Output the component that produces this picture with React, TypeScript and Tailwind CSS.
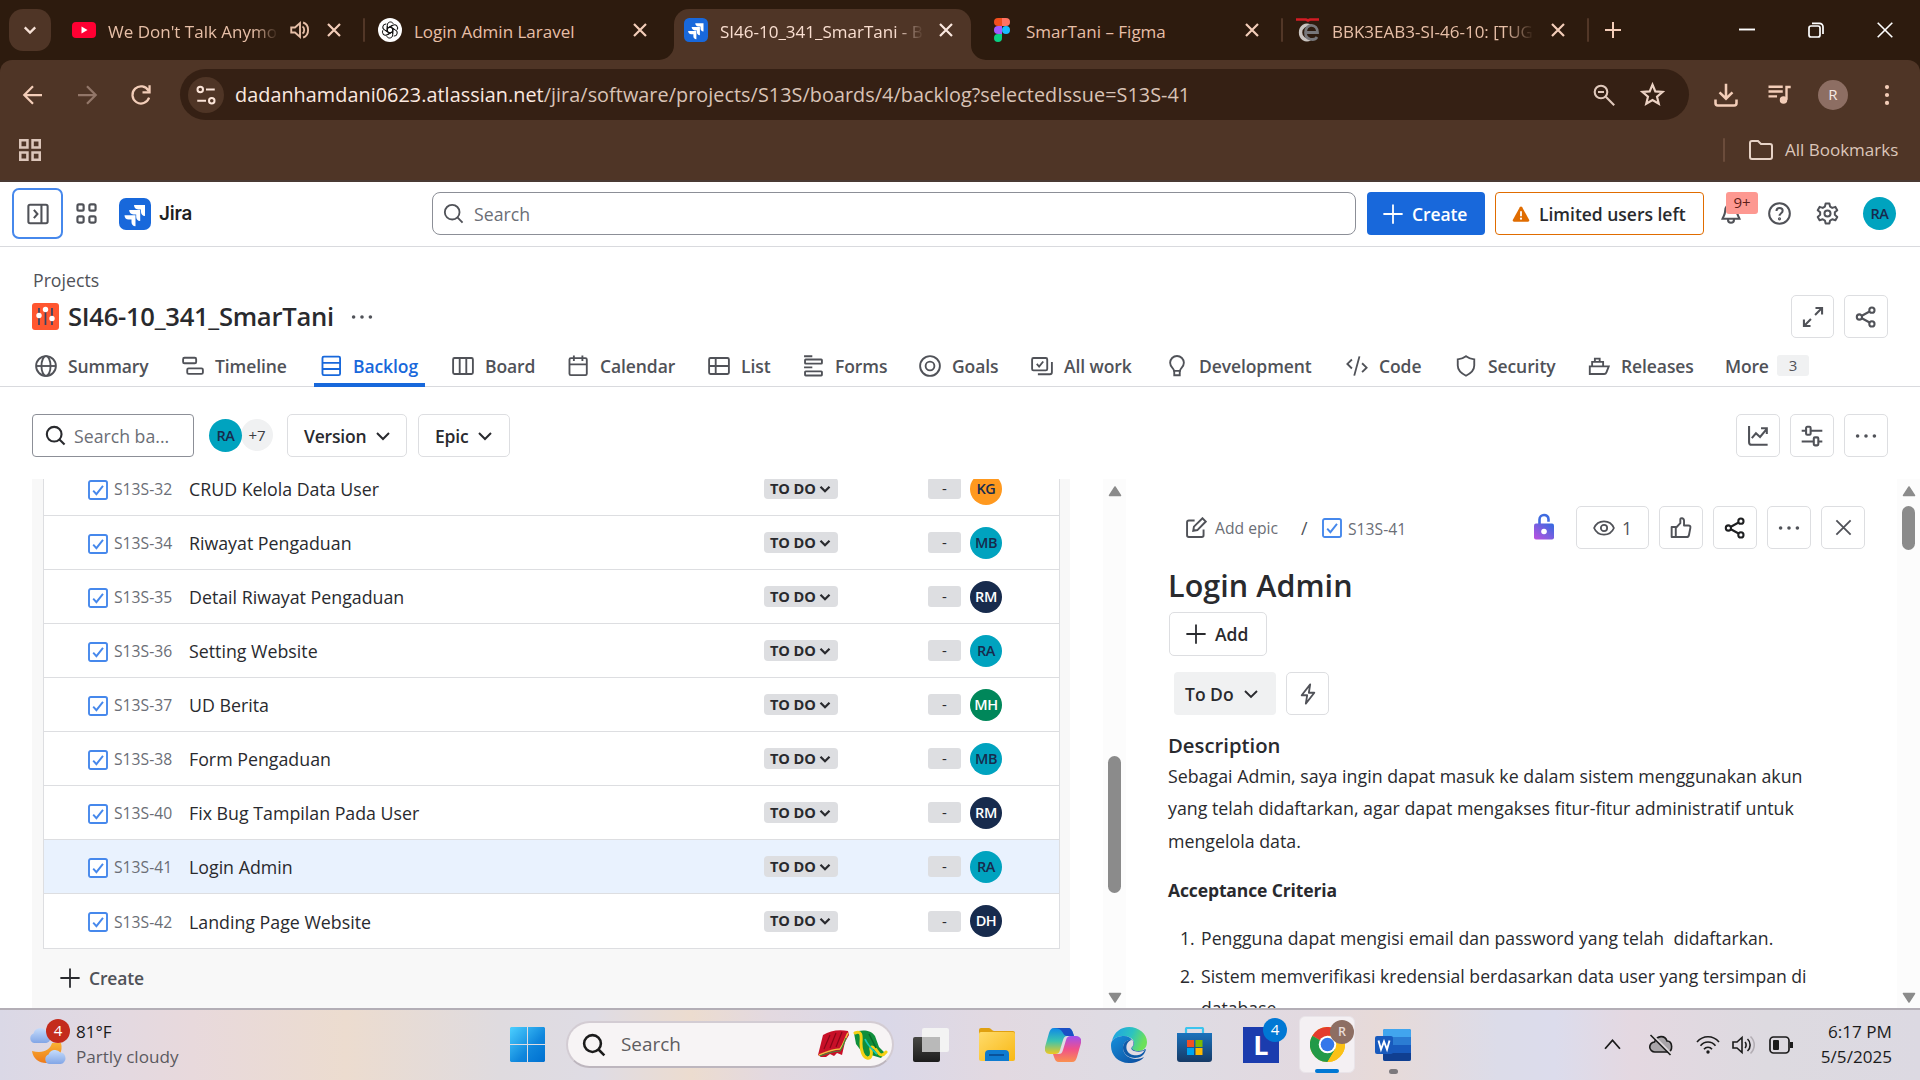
import React from "react";

type IconProps = { children: React.ReactNode; className?: string; sw?: number };

/* 16-unit line icon, drawn at 22px unless a class says otherwise */
function I({ children, className = "size-[22px]", sw = 1.4 }: IconProps) {
  return (
    <svg viewBox="0 0 16 16" className={`shrink-0 ${className}`} fill="none" stroke="currentColor" strokeWidth={sw}>
      {children}
    </svg>
  );
}

const Plus = ({ className = "size-[22px]" }: { className?: string }) => (
  <I className={className} sw={1.3}><path d="M8 1v14M1 8h14" /></I>
);
const Chevron = ({ className = "size-[16px]", sw = 2 }: { className?: string; sw?: number }) => (
  <I className={className} sw={sw}><path d="M2 5l6 6 6-6" /></I>
);
const Dots = () => (
  <I><g fill="currentColor" stroke="none"><circle cx="1.9" cy="8" r="1.3" /><circle cx="8" cy="8" r="1.3" /><circle cx="14.1" cy="8" r="1.3" /></g></I>
);
const Magnifier = ({ className = "size-[22px]", sw = 1.4 }: { className?: string; sw?: number }) => (
  <I className={className} sw={sw}><circle cx="7" cy="7" r="5.6" /><path d="M11 11l3.9 3.9" /></I>
);
const Share = () => (
  <I sw={1.5}><circle cx="3.2" cy="8" r="1.9" /><circle cx="12.3" cy="3" r="1.9" /><circle cx="12.3" cy="13" r="1.9" /><path d="M5 7.1l5.6-3.1M5 8.9l5.6 3.1" /></I>
);
const Cross = ({ className = "size-[16px]", sw = 2 }: { className?: string; sw?: number }) => (
  <I className={className} sw={sw}><path d="M2 2l12 12M14 2L2 14" /></I>
);
const TaskCheck = () => (
  <svg viewBox="0 0 20 20" className="size-[20px] shrink-0" fill="none" stroke="#4688ec">
    <rect x="1" y="1" width="18" height="18" rx="1.8" strokeWidth="1.9" fill="#fff" />
    <path d="M5.2 10.6l3.2 3.6 6.6-8.4" strokeWidth="1.9" />
  </svg>
);
const JiraMark = ({ className }: { className: string }) => (
  <svg viewBox="0 0 32 32" className={`shrink-0 ${className}`}>
    <rect width="32" height="32" rx="7" fill="#1868db" />
    <g fill="#fff">
      <path d="M15 7h11v11c-2.5 0-4-1.8-4-4v-2.600h-2.800c-2.500 0-4.200-1.900-4.200-4.400z" />
      <path d="M10.200 12.100h11v11c-2.500 0-4-1.800-4-4v-2.600h-2.800c-2.500 0-4.200-1.900-4.200-4.400z" />
      <path d="M5.500 17.200h11v11c-2.500 0-4-1.800-4-4v-2.600H9.700c-2.500 0-4.200-1.900-4.200-4.400z" />
    </g>
  </svg>
);

/* ---------- browser ---------- */

function OpenAiMark() {
  return (
    <svg viewBox="0 0 24 24" className="size-[24px]">
      <circle cx="12" cy="12" r="12" fill="#fff" />
      <g fill="none" stroke="#111" strokeWidth="1">
        {[0, 60, 120, 180, 240, 300].map((a) => (
          <path key={a} transform={`rotate(${a} 12 12)`} d="M9.300 13.500V7.200c0-3.600 4.600-4.400 6-1.400M9.300 10.400l2.700-1.600 5 2.900" />
        ))}
      </g>
    </svg>
  );
}

function FigmaMark() {
  return (
    <svg viewBox="0 0 16 24" className="h-[24px] w-[16px]">
      <path d="M4 0h4v8H4a4 4 0 010-8z" fill="#f24e1e" />
      <path d="M8 0h4a4 4 0 010 8H8z" fill="#ff7262" />
      <path d="M4 8h4v8H4a4 4 0 010-8z" fill="#a259ff" />
      <circle cx="12" cy="12" r="4" fill="#1abcfe" />
      <path d="M4 16h4v4a4 4 0 11-4-4z" fill="#0acf83" />
    </svg>
  );
}

function CeloeMark() {
  return (
    <svg viewBox="0 0 24 24" className="size-[24px]" fill="none">
      <path d="M0 1.500h10l2 1 2-1h9" stroke="#d41c24" strokeWidth="2.600" />
      <path d="M14 8a6.500 7.300 0 100 13" stroke="#c9c4c0" strokeWidth="3.400" />
      <path d="M9.500 14.500h12c0-9-11.500-10-12 0 0 8 9 8.500 11.500 4.500" stroke="#77777a" strokeWidth="2.800" />
    </svg>
  );
}

const tabs = [
  {
    title: "We Don't Talk Anymo",
    width: "w-[174px]",
    audio: true,
    fade: true,
    sep: true,
    icon: (
      <svg viewBox="0 0 24 16" className="h-[16px] w-[24px]"><rect width="24" height="16" rx="4" fill="#ff0033" /><path d="M9.500 4.500v7l6-3.500z" fill="#fff" /></svg>
    ),
  },
  { title: "Login Admin Laravel", width: "w-[200px]", icon: <OpenAiMark /> },
  { title: "SI46-10_341_SmarTani - B", width: "w-[208px]", fade: true, active: true, icon: <JiraMark className="size-[24px]" /> },
  { title: "SmarTani – Figma", width: "w-[200px]", sep: true, icon: <FigmaMark /> },
  { title: "BBK3EAB3-SI-46-10: [TUG", width: "w-[206px]", fade: true, sep: true, icon: <CeloeMark /> },
];

function TabStrip() {
  return (
    <div className="flex h-[60px] shrink-0 bg-[#2d1b0e] pl-[9px] text-[#e7bfa7]">
      <div className="mt-[9px] flex size-[42px] items-center justify-center rounded-[14px] bg-[#4f3526] text-[#f6e1d6]">
        <Chevron className="size-[14px]" sw={2.6} />
      </div>
      <div className="ml-[7px] flex">
        {tabs.map((t) => (
          <div key={t.title} className="relative flex h-[60px] w-[306px] items-center">
            {t.active && (
              <>
                <div className="absolute top-[9px] left-[4px] h-[51px] w-[297px] rounded-t-[15px] bg-[#4f3526]" />
                <svg viewBox="0 0 327 15" className="absolute bottom-0 left-[-11px] h-[15px] w-[327px]" fill="#4f3526">
                  <path d="M0 15a15 15 0 0015-15v15zM327 15a15 15 0 01-15-15v15z" />
                </svg>
              </>
            )}
            <div className="relative ml-[14px] flex w-[24px] justify-center">{t.icon}</div>
            <div
              className={`relative ml-[12px] pt-[3px] text-[17px] leading-[28px] whitespace-nowrap ${t.width} ${t.active ? "text-[#f9ded0]" : ""} ${t.fade ? "[mask-image:linear-gradient(to_right,#000_84%,transparent_98%)]" : ""}`}
            >
              {t.title}
            </div>
            {t.audio && (
              <I className="ml-[8px] size-[20px]" sw={1.500}>
                <path d="M1 6v4h3l4 3.500v-11L4 6z" /><path d="M10 5.200c1.800 1 1.800 4.600 0 5.600M10.500 2c5.300 1.600 5.300 10.400 0 12" />
              </I>
            )}
            <div className={`absolute top-[22px] left-[268px] ${t.active ? "text-[#fbe9e0]" : "text-[#f3cdb8]"}`}>
              <Cross sw={2.200} />
            </div>
            {t.sep && <div className="absolute top-[18px] right-[-1px] h-[24px] w-[2px] rounded bg-[#523727]" />}
          </div>
        ))}
      </div>
      <div className="flex w-[50px] items-center justify-center text-[#f3cdb8]">
        <I className="size-[16px]" sw={2}><path d="M8 0v16M0 8h16" /></I>
      </div>
      <div className="ml-[101px] flex items-center gap-[53px] text-white">
        <I className="size-[16px]" sw={1.900}><path d="M0 7.500h16" /></I>
        <I className="size-[16px]" sw={1.700}><rect x="1" y="4" width="11" height="11" rx="2" /><path d="M4 1.300h7.500a3.500 3.500 0 013.500 3.500V12" /></I>
        <I className="size-[16px]" sw={1.600}><path d="M.7.700l14.600 14.600M15.300.700L.7 15.300" /></I>
      </div>
    </div>
  );
}

function Toolbar() {
  return (
    <div className="flex h-[122px] shrink-0 flex-col border-b-2 border-[#4a3a34] bg-[#4f3526] text-[#f3cdb8]">
      <div className="flex h-[69px] items-center pl-[21px]">
        <I className="size-[24px]" sw={1.500}><path d="M14 8H2.500M8 2.200L2.200 8 8 13.800" /></I>
        <I className="ml-[30px] size-[24px] text-[#927668]" sw={1.500}><path d="M2 8h11.500M8 2.200L13.800 8 8 13.800" /></I>
        <I className="ml-[30px] size-[24px]" sw={1.500}><path d="M13.400 9.800A5.700 5.700 0 1113 5.200M13.700 1.500v4.700H9" /></I>
        <div className="ml-[27px] flex h-[51px] w-[1509px] items-center rounded-full bg-[#352014]">
          <div className="ml-[8px] flex size-[36px] items-center justify-center rounded-full bg-[#4f3526] text-[#fbe4d8]">
            <I className="size-[20px]" sw={1.600}><circle cx="3.400" cy="3.500" r="2.200" /><path d="M8 3.500h7" /><circle cx="12.600" cy="12.500" r="2.200" /><path d="M1 12.500h7" /></I>
          </div>
          <div className="ml-[11px] w-[1349px] text-[19.800px] tracking-[0.060px] whitespace-nowrap text-[#d9c3b6]">
            <span className="text-[#fbe9e0]">dadanhamdani0623.atlassian.net</span>/jira/software/projects/S13S/boards/4/backlog?selectedIssue=S13S-41
          </div>
          <I className="ml-[8px] size-[24px] text-[#e0c8bb]" sw={1.400}><circle cx="6" cy="6" r="4.200" /><path d="M9.200 9.200l5.600 5.600M4 6h4" /></I>
          <I className="ml-[24px] size-[25px] text-[#ecd2c4]" sw={1.400}><path d="M8 1.700l1.800 4.300 4.600.4-3.500 3 1.100 4.500L8 11.500l-4 2.400 1.100-4.500-3.500-3 4.600-.4z" /></I>
        </div>
        <I className="ml-[25px] size-[24px]" sw={1.700}><path d="M8 .5v9.700M3.700 6.300L8 10.500l4.300-4.200M1 11v2.300c0 1 .5 1.700 1.500 1.700h11c1 0 1.500-.7 1.500-1.700V11" /></I>
        <I className="ml-[29px] size-[24px]" sw={1.600}><path d="M1 2.500h9.500M1 5.700h9.500M1 8.900h5.700" /><path d="M13 11.200V2.700h2.800" /><circle cx="11" cy="11.400" r="1.700" fill="currentColor" /></I>
        <div className="ml-[27px] flex size-[30px] items-center justify-center rounded-full bg-[#8d6e63] text-[15px] text-[#f5e9e4]">R</div>
        <I className="ml-[27px] size-[24px]"><g fill="currentColor" stroke="none"><circle cx="8" cy="2.700" r="1.400" /><circle cx="8" cy="8" r="1.400" /><circle cx="8" cy="13.300" r="1.400" /></g></I>
      </div>
      <div className="flex h-[42px] items-center pl-[18px] text-[#dcc6ba]">
        <I className="size-[24px]" sw={1.700}><path d="M1.500 1.500h4.800v4.800H1.500zM9.700 1.500h4.800v4.800H9.700zM1.500 9.700h4.800v4.800H1.500zM9.700 9.700h4.800v4.800H9.700z" /></I>
        <div className="ml-[1681px] h-[24px] w-[2px] rounded bg-[#6b4c3b]" />
        <svg viewBox="0 0 24 20" className="ml-[24px] h-[20px] w-[24px]" fill="none" stroke="#e6d2c6" strokeWidth="2"><path d="M1 3a2 2 0 012-2h6l3 3h9a2 2 0 012 2v11a2 2 0 01-2 2H3a2 2 0 01-2-2z" /></svg>
        <span className="ml-[12px] text-[17px] whitespace-nowrap">All Bookmarks</span>
      </div>
    </div>
  );
}

/* ---------- Jira ---------- */

const outlineBtn = "flex h-[43px] shrink-0 items-center rounded-[5px] border border-[#dddee1] bg-white";

function JiraHeader() {
  return (
    <header className="flex h-[65px] shrink-0 items-center border-b border-[#d9dade] bg-white pb-[1px] pl-[12px] text-[#505258]">
      <div className="flex size-[51px] items-center justify-center rounded-[7px] border-2 border-[#4688ec]">
        <I sw={1.500}><rect x="1" y="1.300" width="14" height="13.400" rx="1.200" /><path d="M10.500 1.300v13.400M5 5l2.600 3L5 11" /></I>
      </div>
      <I className="ml-[12px] size-[23px]" sw={1.500}>
        <rect x="1.700" y="1.700" width="4.300" height="4.300" rx="1" /><rect x="10" y="1.700" width="4.300" height="4.300" rx="1" />
        <rect x="1.700" y="10" width="4.300" height="4.300" rx="1" /><rect x="10" y="10" width="4.300" height="4.300" rx="1" />
      </I>
      <JiraMark className="ml-[21px] size-[32px]" />
      <span className="ml-[8px] w-[241px] pt-[1px] font-['Inter'] text-[18.800px] font-semibold tracking-[-0.200px] text-[#1e1f21]">Jira</span>
      <div className="ml-[32px] flex h-[43px] w-[924px] items-center rounded-[8px] border border-[#8c8f97] pl-[10px]">
        <Magnifier className="size-[21px]" />
        <span className="ml-[10px] pt-[2px] text-[17.700px] text-[#6b6e76]">Search</span>
      </div>
      <div className="ml-[11px] flex h-[43px] w-[118px] items-center rounded-[4px] bg-[#1868db] pl-[15px] text-white">
        <Plus /><span className="ml-[8px] pt-[2px] text-[17.500px] font-semibold tracking-[-0.100px]">Create</span>
      </div>
      <div className="ml-[10px] flex h-[43px] w-[209px] items-center rounded-[4px] border border-[#e06c00] pl-[16px]">
        <svg viewBox="0 0 18 16" className="h-[16px] w-[18px]"><path d="M9 .5c.5 0 .9.300 1.200.8l6.900 12.500c.5 1-.1 1.900-1.100 1.900H2C1 15.700.4 14.800.9 13.800L7.800 1.300C8.100.8 8.500.500 9 .500z" fill="#e06c00" /><path d="M9 5.300v5" stroke="#fff" strokeWidth="1.800" /><circle cx="9" cy="12.700" r="1.100" fill="#fff" /></svg>
        <span className="ml-[9px] pt-[2px] text-[17.500px] font-semibold tracking-[-0.020px] whitespace-nowrap text-[#292a2e]">Limited users left</span>
      </div>
      <div className="relative ml-[16px]">
        <I sw={1.500}><path d="M8 1.500c-3 0-4.300 2-4.300 4.500 0 2.800-1.200 3.300-1.900 5.500h12.400c-.7-2.200-1.900-2.700-1.900-5.500C12.300 3.500 11 1.500 8 1.500zM5.800 12c0 3.200 4.400 3.200 4.400 0" /></I>
        <div className="absolute top-[-11px] left-[6px] flex h-[22px] w-[32px] items-center justify-center rounded-[3px] bg-[#fd9891] text-[15px] text-[#5d1f1a]">9+</div>
      </div>
      <I className="ml-[26px] size-[23px]"><circle cx="8" cy="8" r="7.200" /><path d="M5.900 6.300c0-2.900 4.300-2.700 4.300-.2 0 1.700-2.200 1.700-2.200 3.500" /><circle cx="8" cy="11.700" r=".4" /></I>
      <I className="ml-[25px] size-[23px]" sw={1.400}><path d="M6.700 1h2.600l.5 2.200 1.500.9 2.200-.7 1.300 2.300-1.700 1.500v1.700l1.700 1.500-1.300 2.300-2.200-.7-1.500.9-.5 2.100H6.700l-.5-2.100-1.500-.9-2.200.7-1.300-2.300 1.700-1.500V7.200L1.200 5.700l1.300-2.300 2.200.7 1.500-.9z" strokeLinejoin="round" /><circle cx="8" cy="8" r="2.100" /></I>
      <div className="ml-[24px] flex size-[33px] items-center justify-center rounded-full bg-[#00a3bf] text-[14.500px] font-semibold tracking-[-0.500px] text-[#172b4d]">RA</div>
    </header>
  );
}

const navItems = [
  { label: "Summary", w: "w-[147px]", icon: <><circle cx="8" cy="8" r="7.200" /><ellipse cx="8" cy="8" rx="3.300" ry="7.200" /><path d="M.8 8h14.400" /></> },
  { label: "Timeline", w: "w-[138px]", icon: <><rect x=".8" y="2" width="9.500" height="4" rx="1" /><rect x="3.800" y="9.700" width="11.400" height="4" rx="1" /></> },
  { label: "Backlog", w: "w-[132px]", active: true, icon: <><rect x="1.800" y="1.200" width="12.800" height="13.400" rx="1" /><path d="M1.800 5.700h12.800M1.800 10.200h12.800" /></> },
  { label: "Board", w: "w-[115px]", icon: <><rect x=".8" y="2.200" width="14.400" height="11.600" rx="1" /><path d="M5.600 2.200v11.600M10.400 2.200v11.600" /></> },
  { label: "Calendar", w: "w-[141px]", icon: <><rect x="1.800" y="2.300" width="12.600" height="12.300" rx="1" /><path d="M1.800 6.800h12.600M5 .3v4M11.200.3v4" /></> },
  { label: "List", w: "w-[94px]", icon: <><rect x=".8" y="2.200" width="14.400" height="11.600" rx="1" /><path d="M.8 8h14.400M5.600 2.200v11.600" /></> },
  { label: "Forms", w: "w-[117px]", icon: <><path d="M1.500.900h6M1.500 9h6" /><rect x="2.200" y="3.300" width="12.300" height="3" rx=".5" /><rect x="2.200" y="11.900" width="12.300" height="3" rx=".5" /></> },
  { label: "Goals", w: "w-[112px]", icon: <><circle cx="8" cy="8" r="7.200" /><circle cx="8" cy="8" r="3.200" /></> },
  { label: "All work", w: "w-[135px]", icon: <><rect x=".8" y="2.200" width="11" height="9" rx="1" /><path d="M4.200 6.500l1.700 1.900 3-3.700M15.200 5v7.500c0 1-.5 1.500-1.500 1.500H5" /></> },
  { label: "Development", w: "w-[180px]", icon: <><path d="M5.800 11.500C5.800 9.500 3 9 3 5.700A5 5 0 0113 5.700C13 9 10.200 9.500 10.200 11.500zM6 11.500v3.200h4v-3.200" /></> },
  { label: "Code", w: "w-[109px]", icon: <><path d="M4.300 3.300L1 6.500l3.300 3.300M11.700 6L15 9.200l-3.300 3.300M9.800 1L6 15" /></> },
  { label: "Security", w: "w-[133px]", icon: <><path d="M8 .9c2 1.500 3.800 2 6 2.300v4.500c0 3.500-2.500 5.700-6 7.400-3.500-1.700-6-3.900-6-7.400V3.200C4.200 2.900 6 2.400 8 .9z" /></> },
  { label: "Releases", w: "w-[137px]", icon: <><path d="M1.300 13.800V8.300h13.800l-1.700 4.300c-.3.800-.8 1.200-1.600 1.200zM3 8V5h8v3M5 5V2.600h3.500V5" /></> },
];

function ProjectHeader() {
  return (
    <div className="flex h-[140px] shrink-0 flex-col border-b border-[#d9dade] text-[#505258]">
      <div className="mt-[20px] ml-[33px] h-[26px] text-[17.700px] leading-[26px]">Projects</div>
      <div className="mt-[2px] flex h-[43px] items-center">
        <svg viewBox="0 0 27 27" className="mb-[1px] ml-[32px] size-[27px]">
          <rect width="27" height="27" rx="3" fill="#ff5630" />
          <path d="M7 5v17M13.500 5v17M20 5v17" stroke="#344563" strokeWidth="1.700" />
          <g fill="#fff"><circle cx="7" cy="12.500" r="2.700" /><circle cx="13.500" cy="6.500" r="2.700" /><circle cx="20" cy="15.500" r="2.700" /></g>
        </svg>
        <span className="ml-[9px] w-[283px] pt-[2px] text-[25.600px] font-semibold tracking-[-0.280px] whitespace-nowrap text-[#292a2e]">SI46-10_341_SmarTani</span>
        <Dots />
        <div className={`${outlineBtn} ml-[1418px] w-[43px] justify-center`}><I sw={1.500}><path d="M9.500 6.500l5-5M9.800 1.400h4.800v4.800M6.500 9.500l-5 5M6.200 14.600H1.400V9.800" /></I></div>
        <div className={`${outlineBtn} ml-[10px] w-[44px] justify-center`}><Share /></div>
      </div>
      <nav className="mt-[7px] ml-[35px] flex h-[41px]">
        {navItems.map((n) => (
          <div key={n.label} className={`relative flex items-center ${n.w} ${n.active ? "text-[#1868db]" : ""}`}>
            <I sw={1.350}>{n.icon}</I>
            <span className="ml-[11px] pt-[2px] text-[17.500px] font-semibold tracking-[-0.090px] whitespace-nowrap">{n.label}</span>
            {n.active && <div className="absolute bottom-[-1px] left-[-6px] h-[4px] w-[111px] bg-[#1868db]" />}
          </div>
        ))}
        <div className="flex items-center text-[17.500px] font-semibold tracking-[-0.200px]">
          <span className="w-[52px] pt-[2px]">More</span>
          <span className="flex h-[21px] w-[32px] items-center justify-center rounded-[3px] bg-[#f0f1f2] text-[15px] font-normal">3</span>
        </div>
      </nav>
    </div>
  );
}

function FilterBar() {
  return (
    <div className="flex h-[92px] shrink-0 items-center pt-[5px] pl-[32px] text-[17.700px] text-[#292a2e]">
      <div className="flex h-[43px] w-[162px] items-center rounded-[4px] border border-[#8c8f97] pl-[12px]">
        <Magnifier className="size-[21px]" sw={1.600} />
        <span className="ml-[8px] pt-[1px] whitespace-nowrap text-[#6b6e76]">Search ba...</span>
      </div>
      <div className="ml-[15px] flex">
        <div className="z-10 flex size-[33px] items-center justify-center rounded-full bg-[#00a3bf] text-[14.500px] font-semibold tracking-[-0.500px] text-[#172b4d]">RA</div>
        <div className="ml-[-1px] flex size-[32px] items-center justify-center rounded-full bg-[#f0f1f2] text-[15px] text-[#3b3d42]">+7</div>
      </div>
      <div className={`${outlineBtn} ml-[14px] w-[120px] pl-[16px] text-[17.500px] font-semibold`}>
        <span className="w-[71px] pt-[1px] tracking-[-0.200px]">Version</span><Chevron />
      </div>
      <div className={`${outlineBtn} ml-[11px] w-[92px] pl-[16px] text-[17.500px] font-semibold`}>
        <span className="w-[42px] pt-[1px] tracking-[-0.200px]">Epic</span><Chevron />
      </div>
      <div className="ml-[1226px] flex gap-[10px] text-[#505258]">
        <div className={`${outlineBtn} w-[44px] justify-center`}><I sw={1.500}><path d="M1.500.7v11.800c0 1.200.7 1.900 1.900 1.900H15M3.500 9.500l3-3.500 3 2.700 4.600-5.500M10.200 2.300h4.200v4.200" /></I></div>
        <div className={`${outlineBtn} w-[44px] justify-center`}><I sw={1.500}><path d="M.5 4.200h3M7 4.200h8.500M.5 12h8.500M13 12h2.500" /><rect x="3.700" y="1.300" width="3.300" height="5.800" rx=".8" /><rect x="9.300" y="9" width="3.300" height="5.800" rx=".8" /></I></div>
        <div className={`${outlineBtn} w-[44px] justify-center`}><Dots /></div>
      </div>
    </div>
  );
}

const issues = [
  { id: "S13S-32", title: "CRUD Kelola Data User", who: "KG", color: "bg-[#ff991f] text-[#172b4d]" },
  { id: "S13S-34", title: "Riwayat Pengaduan", who: "MB", color: "bg-[#00a3bf] text-[#172b4d]" },
  { id: "S13S-35", title: "Detail Riwayat Pengaduan", who: "RM", color: "bg-[#172b4d] text-white" },
  { id: "S13S-36", title: "Setting Website", who: "RA", color: "bg-[#00a3bf] text-[#172b4d]" },
  { id: "S13S-37", title: "UD Berita", who: "MH", color: "bg-[#00875a] text-white" },
  { id: "S13S-38", title: "Form Pengaduan", who: "MB", color: "bg-[#00a3bf] text-[#172b4d]" },
  { id: "S13S-40", title: "Fix Bug Tampilan Pada User", who: "RM", color: "bg-[#172b4d] text-white" },
  { id: "S13S-41", title: "Login Admin", who: "RA", color: "bg-[#00a3bf] text-[#172b4d]", selected: true },
  { id: "S13S-42", title: "Landing Page Website", who: "DH", color: "bg-[#172b4d] text-white" },
];

function Backlog() {
  return (
    <div className="ml-[32px] flex w-[1038px] shrink-0 flex-col overflow-hidden bg-[#f8f8f8] px-[11px]">
      <div className="mt-[-17px] w-[1017px] shrink-0 border-x border-b border-[#dddee1]">
        {issues.map((r) => (
          <div key={r.id} className={`flex h-[54px] items-center border-b border-[#dddee1] pl-[44px] last:border-b-0 ${r.selected ? "bg-[#e9f2fe]" : "bg-white"}`}>
            <div className="pt-[2px]"><TaskCheck /></div>
            <span className="ml-[6px] w-[75px] pt-[3px] text-[15.700px] text-[#6b6e76]">{r.id}</span>
            <span className="w-[575px] pt-[2px] text-[17.800px] text-[#292a2e]">{r.title}</span>
            <div className="flex h-[21px] w-[74px] items-center rounded-[4px] bg-[#dddee1] pl-[6px] text-[14.600px] font-bold tracking-[-0.100px] text-[#292a2e]">
              <span className="w-[49px] whitespace-nowrap">TO DO</span>
              <Chevron className="size-[12px]" sw={3} />
            </div>
            <div className="ml-[90px] flex h-[21px] w-[33px] items-center justify-center rounded-[3px] bg-[#dddee1] text-[15px] text-[#292a2e]">-</div>
            <div className={`ml-[9px] flex size-[32px] items-center justify-center rounded-full text-[14.500px] font-semibold tracking-[-0.400px] ${r.color}`}>{r.who}</div>
          </div>
        ))}
      </div>
      <div className="flex h-[57px] shrink-0 items-center pl-[16px] text-[#292a2e]">
        <Plus /><span className="ml-[8px] pt-[1px] text-[17.500px] font-semibold tracking-[-0.150px] text-[#505258]">Create</span>
      </div>
    </div>
  );
}

function Arrow({ down = false }: { down?: boolean }) {
  return (
    <svg viewBox="0 0 14 11" className={`h-[11px] w-[14px] ${down ? "rotate-180" : ""}`}>
      <path d="M7 1l5.500 8.500h-11z" fill="#8b8b8b" stroke="#8b8b8b" strokeWidth="1.500" strokeLinejoin="round" />
    </svg>
  );
}

function Scrollbar({ offset, thumb }: { offset: string; thumb: string }) {
  return (
    <div className="flex w-[23px] shrink-0 flex-col items-center bg-[#fcfcfc] pt-[7px] pb-[5px]">
      <Arrow />
      <div className={`w-[13px] rounded-full bg-[#8b8b8b] ${offset} ${thumb}`} />
      <div className="mt-auto"><Arrow down /></div>
    </div>
  );
}

function Detail() {
  return (
    <div className="flex w-[771px] shrink-0 flex-col overflow-hidden pl-[42px] text-[17.800px] text-[#292a2e]">
      <div className="mt-[27px] flex h-[43px] items-center text-[#505258]">
        <I className="ml-[17px] size-[22px]" sw={1.400}><path d="M7 2.500H2.800c-.9 0-1.300.4-1.300 1.300v9.400c0 .9.400 1.300 1.300 1.300h9.400c.9 0 1.300-.4 1.300-1.300V9M6 10l.5-3L12.700.9l2.400 2.400L9 9.500z" /></I>
        <span className="ml-[8px] w-[86px] pt-[2px] text-[15.700px] text-[#6b6e76]">Add epic</span>
        <span className="w-[21px] pt-[2px]">/</span>
        <TaskCheck />
        <span className="ml-[6px] w-[183px] pt-[5px] text-[15.700px] text-[#6b6e76]">S13S-41</span>
        <svg viewBox="0 0 20 27" className="mb-[2px] ml-[3px] h-[27px] w-[20px]" fill="none">
          <defs><linearGradient id="lock" x1="0" y1="1" x2="1" y2="0"><stop offset="0" stopColor="#bf4fe0" /><stop offset=".5" stopColor="#7a5fe0" /><stop offset="1" stopColor="#2f6ae0" /></linearGradient></defs>
          <path d="M5.500 11V6.500c0-6 9-6 9-.2v2.500" stroke="#3f6be0" strokeWidth="2.600" />
          <rect x="0" y="10.500" width="20" height="16" rx="2" fill="url(#lock)" /><circle cx="10" cy="18.500" r="2.800" fill="#fff" />
        </svg>
        <div className={`${outlineBtn} ml-[22px] w-[73px] pl-[16px]`}>
          <I sw={1.300}><path d="M.8 8C3.500 1.500 12.500 1.500 15.200 8 12.500 14.500 3.500 14.500 .8 8z" /><circle cx="8" cy="8" r="2.300" /></I>
          <span className="ml-[7px] pt-[1px] text-[17.500px] font-medium text-[#505258]">1</span>
        </div>
        <div className={`${outlineBtn} ml-[10px] w-[44px] justify-center`}><I sw={1.400}><path d="M1.200 7.300h3v7.300h-3zM4.200 8l3.300-3.500V1.800c0-1.400 2.700-1.200 2.700 1v3.400h3.200c1.200 0 1.600.7 1.400 1.700l-1 5.200c-.2 1-.8 1.500-1.800 1.500H4.200" strokeLinejoin="round" /></I></div>
        <div className={`${outlineBtn} ml-[10px] w-[44px] justify-center text-[#1e1f21]`}><Share /></div>
        <div className={`${outlineBtn} ml-[10px] w-[44px] justify-center`}><Dots /></div>
        <div className={`${outlineBtn} ml-[10px] w-[44px] justify-center`}><Cross className="size-[19px]" sw={1.500} /></div>
      </div>
      <h1 className="mt-[15px] h-[43px] text-[30.500px] leading-[43px] font-semibold tracking-[0.050px]">Login Admin</h1>
      <div className={`${outlineBtn} mt-[5px] ml-[1px] h-[44px]! w-[98px] pl-[15px] text-[17.500px] font-semibold`}><Plus /><span className="ml-[8px] pt-[1px]">Add</span></div>
      <div className="mt-[16px] ml-[6px] flex gap-[10px]">
        <div className="flex h-[43px] w-[102px] items-center rounded-[4px] bg-[#f0f1f2] pl-[11px] text-[17.500px] font-semibold">
          <span className="w-[58px] pt-[1px]">To Do</span><Chevron sw={1.900} />
        </div>
        <div className={`${outlineBtn} w-[43px] justify-center text-[#505258]`}><I sw={1.300}><path d="M9.600 1L3.400 8.900h4L6.400 15l6.200-7.900h-4z" strokeLinejoin="round" /></I></div>
      </div>
      <h2 className="mt-[14px] h-[32px] text-[20.300px] leading-[32px] font-semibold">Description</h2>
      <p className="mt-[-1px] h-[97px] leading-[32.400px] whitespace-nowrap">
        Sebagai Admin, saya ingin dapat masuk ke dalam sistem menggunakan akun
        <br />
        yang telah didaftarkan, agar dapat mengakses fitur-fitur administratif untuk
        <br />
        mengelola data.
      </p>
      <p className="mt-[17px] h-[32px] text-[17.500px] leading-[32px] font-bold tracking-[-0.120px]">Acceptance Criteria</p>
      <ol className="mt-[16px] text-[17.600px] leading-[32.400px] whitespace-pre">
        <li className="flex h-[38px]"><span className="w-[33px] pl-[12px]">1.</span><span className="tracking-[0.050px]">Pengguna dapat mengisi email dan password yang telah{"  "}didaftarkan.</span></li>
        <li className="flex"><span className="w-[33px] pl-[12px]">2.</span>{"Sistem memverifikasi kredensial berdasarkan data user yang tersimpan di\ndatabase."}</li>
      </ol>
    </div>
  );
}

/* ---------- Windows taskbar ---------- */

function Weather() {
  return (
    <div className="relative ml-[28px] h-[44px] w-[38px]">
      <svg viewBox="0 0 38 44" className="h-[44px] w-[38px]">
        <defs>
          <linearGradient id="cl" x1="0" y1="0" x2="0" y2="1"><stop offset="0" stopColor="#c6dcfb" /><stop offset="1" stopColor="#82a6e6" /></linearGradient>
          <linearGradient id="mo" x1="0" y1="0" x2="0" y2="1"><stop offset="0" stopColor="#f9b233" /><stop offset="1" stopColor="#ee7a1a" /></linearGradient>
        </defs>
        <path d="M33 20a16 16 0 01-1 11c-6 13-26 12-28-3 11 3 18-1 20-8z" fill="url(#mo)" />
        <path d="M6 20a5 5 0 01-.5-9.500 7 7 0 0112.500-2.500c4 0 5 4 5 6s-2 6-5 6z" fill="url(#cl)" />
        <path d="M21 41a5 5 0 01-.5-9.500 7 7 0 0112-2c4 0 5 4 5 6s-2 5.500-5 5.500z" fill="url(#cl)" />
      </svg>
      <div className="absolute top-[-4px] left-[18px] flex size-[24px] items-center justify-center rounded-full bg-[#c42b1c] text-[15px] text-white">4</div>
    </div>
  );
}

function SariArt() {
  return (
    <svg viewBox="0 0 72 32" className="h-[32px] w-[72px]">
      <path d="M7 6C14 2 22 0 32 2l1 4-4 7-3 13-5-2-3 3-4-2-4 3-5 0-3-2z" fill="#c81028" />
      <path d="M32 4c-3 5-4 11-8 16-6 0-14 3-21 6" fill="none" stroke="#f0c040" strokeWidth="1.500" />
      <path d="M30 9c-2 5-3 9-6 13-6 0-12 2-20 5" fill="none" stroke="#3d8a3a" strokeWidth="1.200" />
      <path d="M14 6l-6 14M20 4l-6 15M26 3l-6 15" stroke="#8a0718" strokeWidth="1.200" />
      <path d="M38 4c7-4 17-3 21 3l4 11 6 6-4 5-10-3-5 3-4-6-6-8z" fill="#0f8f3c" />
      <path d="M39 4c8-3 6 5 6 11s2 13 6 14 5-4 4-8 3-4 6 1 6 5 9 1" fill="none" stroke="#f4d014" strokeWidth="3" strokeLinecap="round" />
      <path d="M53 5l7 14" stroke="#0a6a2a" strokeWidth="1.500" />
      <path d="M49 10c3 7 7 10 12 15" fill="none" stroke="#18c8b8" strokeWidth="1.800" />
    </svg>
  );
}

function Taskbar() {
  return (
    <div className="flex h-[72px] shrink-0 items-center border-t-2 border-[#b3aeb6] bg-[linear-gradient(90deg,#dad8e6_0%,#e3d9e1_6%,#e8d9dc_10%,#ecdccf_18%,#dfdbdf_26%,#dfdce4_31%,#ecdccf_36%,#e3d9e0_40%,#dad8e8_46%,#e2d9e1_52%,#dedce4_60%,#e2d9e0_68%,#e7dad8_72%,#dcdce9_78%,#dcdcec_81%,#e4d8e1_85%,#dddae0_92%,#dcd9e2_100%)] pb-[1px] text-[#1b1b1b]">
      <Weather />
      <div className="ml-[10px] w-[434px] text-[17.100px] leading-[24.500px]">
        <div>81°F</div>
        <div className="text-[#5b5960]">Partly cloudy</div>
      </div>
      <svg viewBox="0 0 35 35" className="size-[35px]">
        <defs><linearGradient id="win" x1="0" y1="0" x2="1" y2="1"><stop offset="0" stopColor="#4cd0ff" /><stop offset=".6" stopColor="#0f86dc" /><stop offset="1" stopColor="#0070d0" /></linearGradient></defs>
        <path d="M1 0h16v17H0V1zM18 0h16l1 1v16H18zM0 18h17v17H1l-1-1zM18 18h17v16l-1 1H18z" fill="url(#win)" />
      </svg>
      <div className="ml-[21px] flex h-[47px] w-[328px] items-center rounded-full border-2 border-[#d3ccd3] border-b-[#bdb6be] bg-[#f7f4f5] pl-[14px]">
        <Magnifier className="size-[24px]" sw={1.700} />
        <span className="ml-[15px] w-[195px] text-[18.900px]  text-[#5e5c60]">Search</span>
        <SariArt />
      </div>
      {/* task view */}
      <svg viewBox="0 0 36 34" className="ml-[19px] h-[34px] w-[36px]">
        <defs><linearGradient id="tv" x1="0" y1="0" x2="0" y2="1"><stop offset="0" stopColor="#484845" /><stop offset="1" stopColor="#1c1c1c" /></linearGradient></defs>
        <rect y="9" width="27" height="25" rx="2" fill="url(#tv)" /><rect x="9" width="27" height="24" rx="2" fill="#f3f3f3" /><rect x="9" y="9" width="18" height="15" fill="#b9b9b9" />
      </svg>
      {/* file explorer */}
      <svg viewBox="0 0 36 34" className="ml-[30px] h-[34px] w-[36px]">
        <defs><linearGradient id="fe" x1="0" y1="0" x2="1" y2="1"><stop offset="0" stopColor="#ffdb6b" /><stop offset="1" stopColor="#f8b814" /></linearGradient></defs>
        <path d="M0 2a2 2 0 012-2h8c2 0 3 3 5 3h19a2 2 0 012 2v10H0z" fill="#e0a010" /><rect y="4" width="36" height="29" rx="2" fill="url(#fe)" />
        <path d="M6 33v-7a4 4 0 014-4h16a4 4 0 014 4v7z" fill="#0f7bd0" /><path d="M10 27h15" stroke="#0a4f96" strokeWidth="1.800" />
      </svg>
      {/* copilot */}
      <svg viewBox="0 0 36 34" className="ml-[30px] h-[34px] w-[36px]">
        <defs>
          <linearGradient id="c1" x1="0" y1="0" x2="0" y2="1"><stop offset="0" stopColor="#0f88e8" /><stop offset=".5" stopColor="#3ac4b0" /><stop offset="1" stopColor="#f0c820" /></linearGradient>
          <linearGradient id="c2" x1="0" y1="0" x2="0" y2="1"><stop offset="0" stopColor="#a050f0" /><stop offset=".5" stopColor="#f0508a" /><stop offset="1" stopColor="#fa9050" /></linearGradient>
        </defs>
        <path d="M9 0h14c3 0 4 2 5 5l1 3h-7c-2 0-3 1-4 4l-3 10c-1 3-2 4-5 4H5c-4 0-6-3-5-7L4 5C5 2 6 0 9 0z" fill="url(#c1)" />
        <path d="M9 0h14c3 0 4 2 5 5l1 3h-7c-2 0-3-1-4-3s-3-5-9-5z" fill="#1b4fc4" />
        <path d="M27 34H14c-3 0-4-2-5-5l-1-3h6c2 0 3-1 4-4l3-10c1-3 2-4 5-4h5c4 0 6 3 5 7l-4 14c-1 3-2 5-5 5z" fill="url(#c2)" />
      </svg>
      {/* edge */}
      <svg viewBox="0 0 36 36" className="ml-[30px] size-[36px]">
        <defs>
          <linearGradient id="e1" x1="0" y1="0" x2="1" y2=".3"><stop offset="0" stopColor="#1d9fe8" /><stop offset=".6" stopColor="#2cc3c0" /><stop offset="1" stopColor="#6ce05a" /></linearGradient>
          <linearGradient id="e2" x1="0" y1="0" x2="1" y2="1"><stop offset="0" stopColor="#1690dc" /><stop offset="1" stopColor="#0c4a9c" /></linearGradient>
        </defs>
        <path d="M1 14C3 5 10 0 18 0c10 0 18 7 18 15 0 6-4 9-9 9-4 0-6-2-6-3s2-2 2-5c0-4-5-7-10-7S3 11 1 14z" fill="url(#e1)" />
        <path d="M1 14c3-4 8-5 12-5 4 0 7 2 8 4-5-1-9 3-9 8 0 7 7 11 13 11 3 0 6-1 8-2-3 4-9 6-15 6C7 36 0 28 0 19c0-2 0-3 1-5z" fill="url(#e2)" />
        <path d="M12 21c0-5 4-9 9-8 2 1 2 3 2 3 0 3-2 4-2 5s2 3 6 3 6-1 7-2c1 0 1 1 0 3-1 3-5 6-10 6-6 0-12-4-12-10z" fill="#0d5aa8" />
        <path d="M21 13c2 1 2 5 0 7-1 1-1 3 2 4 4 1 8 1 11-1-3 5-8 6-12 5-5-1-8-6-6-11 1-2 3-4 5-4z" fill="#e2dbe3" />
      </svg>
      {/* store */}
      <svg viewBox="0 0 36 36" className="ml-[30px] size-[36px]">
        <defs><linearGradient id="st" x1="0" y1="0" x2="0" y2="1"><stop offset="0" stopColor="#1a72bc" /><stop offset="1" stopColor="#163a66" /></linearGradient></defs>
        <path d="M9 8V2a1 1 0 011-1h15a1 1 0 011 1v6" fill="none" stroke="#3cc4ee" strokeWidth="2.200" /><path d="M0 6h35v26a3 3 0 01-3 3H3a3 3 0 01-3-3z" fill="url(#st)" />
        <path d="M10 13h7v7h-7z" fill="#f25022" /><path d="M18.500 13h7v7h-7z" fill="#7fba00" /><path d="M10 21h7v7h-7z" fill="#00a4ef" /><path d="M18.500 21h7v7h-7z" fill="#ffb900" />
      </svg>
      <div className="relative ml-[30px] flex size-[36px] items-center justify-center bg-[#1b3cae] text-[27px] leading-none font-bold text-white">
        L
        <div className="absolute top-[-9px] left-[20px] flex size-[24px] items-center justify-center rounded-full bg-[#0078d4] text-[15px] font-normal">4</div>
      </div>
      <div className="relative ml-[20px] flex h-[57px] w-[56px] items-center justify-center rounded-[6px] border border-[#e9e4e9] bg-[#f4f0f3]">
        <svg viewBox="0 0 36 36" className="size-[35px]">
          <circle cx="18" cy="18" r="18" fill="#fbc116" />
          <path d="M18 18L2.400 9A18 18 0 0133.600 9z" fill="#e33b2e" /><path d="M18 18L2.400 9A18 18 0 0018 36l8-13.500z" fill="#229a48" /><path d="M18 9h15.600A18 18 0 0118 36l8-13.500z" fill="#fbc116" />
          <circle cx="18" cy="18" r="9" fill="#fff" /><circle cx="18" cy="18" r="7" fill="#3478ea" />
        </svg>
        <div className="absolute top-[3px] left-[30px] flex size-[24px] items-center justify-center rounded-full bg-[#8d6e63] text-[12.500px] font-semibold text-[#e9dcd6]">R</div>
        <div className="absolute bottom-[-1px] left-[15px] h-[4px] w-[24px] rounded-full bg-[#0078d4]" />
      </div>
      <div className="relative ml-[20px]">
        <svg viewBox="0 0 36 34" className="h-[34px] w-[36px]">
          <rect x="8" y="1" width="28" height="32" rx="2" fill="#2b7cd3" /><path d="M8 3a2 2 0 012-2h24a2 2 0 012 2v6H8z" fill="#41a5ee" /><path d="M8 17h28v8H8z" fill="#185abd" /><path d="M8 25h28v6a2 2 0 01-2 2H10a2 2 0 01-2-2z" fill="#103f91" />
          <rect y="8" width="18" height="18" rx="2" fill="#185abd" />
          <path d="M3.500 12.500l2.500 9 3-8 3 8 2.500-9" fill="none" stroke="#fff" strokeWidth="1.900" />
        </svg>
        <div className="absolute top-[41px] left-[14px] h-[5px] w-[9px] rounded-full bg-[#7c797d]" />
      </div>
      <I className="ml-[193px] size-[17px]" sw={1.700}><path d="M1 12l7-8 7 8" /></I>
      <svg viewBox="0 0 26 22" className="ml-[27px] h-[22px] w-[26px]" fill="none" stroke="#1b1b1b" strokeWidth="1.600">
        <path d="M7 18a5 5 0 01-.5-10C9 1 17 1 19 7c6 0 6 11 1 11z" fill="#a9a5a9" /><path d="M4 .5l20 20" stroke="#e0dade" strokeWidth="2.200" /><path d="M2.500 1l20 20" />
      </svg>
      <svg viewBox="0 0 24 20" className="ml-[22px] h-[20px] w-[24px]" fill="none" stroke="#1b1b1b" strokeWidth="1.600">
        <path d="M1 7c6-7 16-7 22 0M4.500 10.700c4-5 11-5 15 0M8 14.200c2-2.600 6-2.600 8 0" /><circle cx="12" cy="17" r="1.700" fill="#1b1b1b" stroke="none" />
      </svg>
      <svg viewBox="0 0 24 20" className="ml-[12px] h-[20px] w-[24px]" fill="none" stroke="#1b1b1b" strokeWidth="1.600">
        <path d="M1 7v6h4l5 4.500v-15L5 7zM13 7c1.500 1.500 1.500 4.500 0 6M15.500 4c3.500 3 3.500 9 0 12" /><path d="M18.500 1.500c5 5 5 12 0 17" stroke="#b3aeb4" />
      </svg>
      <svg viewBox="0 0 25 18" className="ml-[13px] h-[18px] w-[25px]" fill="none" stroke="#1b1b1b" strokeWidth="1.700">
        <rect x="1" y="1" width="19" height="16" rx="3.500" /><rect x="4" y="4" width="6" height="10" rx="1" fill="#1b1b1b" stroke="none" /><path d="M22.500 6v6" strokeWidth="3" />
      </svg>
      <div className="ml-auto pr-[28px] text-right text-[17.100px] leading-[24.500px] whitespace-nowrap">
        <div>6:17 PM</div>
        <div>5/5/2025</div>
      </div>
    </div>
  );
}

export default function App() {
  return (
    <div className="flex h-[1080px] w-[1920px] flex-col overflow-hidden bg-white font-['Open_Sans',sans-serif]">
      <div className="bg-[#2d1b0e]"><TabStrip /><div className="overflow-hidden rounded-t-[12px]"><Toolbar /></div></div>
      <JiraHeader />
      <ProjectHeader />
      <FilterBar />
      <main className="flex h-[529px] shrink-0 overflow-hidden">
        <Backlog />
        <div className="w-[33px] shrink-0" />
        <Scrollbar offset="mt-[259px]" thumb="h-[137px]" />
        <Detail />
        <Scrollbar offset="mt-[9px]" thumb="h-[44px]" />
      </main>
      <Taskbar />
    </div>
  );
}
